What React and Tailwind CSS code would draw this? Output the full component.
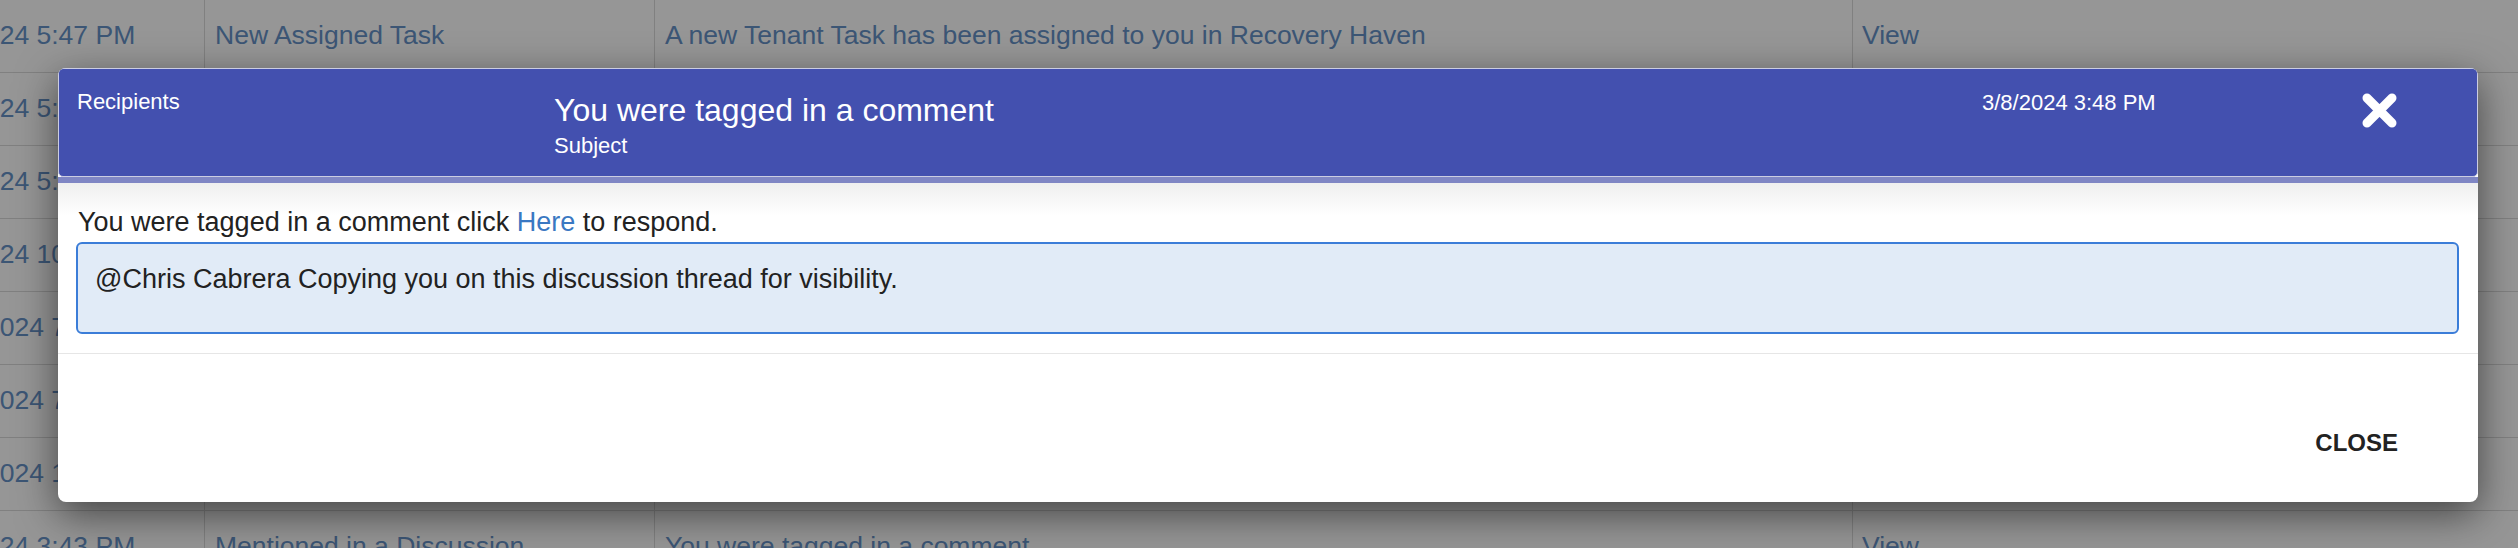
const rows = [
  { date: '3/8/2024 5:47 PM', subject: 'New Assigned Task', message: 'A new Tenant Task has been assigned to you in Recovery Haven' },
  { date: '3/8/2024 5:45 PM', subject: 'New Assigned Task', message: 'A new Tenant Task has been assigned to you in Recovery Haven' },
  { date: '3/8/2024 5:12 PM', subject: 'New Assigned Task', message: 'A new Tenant Task has been assigned to you in Recovery Haven' },
  { date: '3/7/2024 10:52 AM', subject: 'Mentioned in a Discussion', message: 'You were tagged in a comment' },
  { date: '2/29/2024 7:15 PM', subject: 'New Assigned Task', message: 'A new Tenant Task has been assigned to you in Recovery Haven' },
  { date: '2/28/2024 7:02 PM', subject: 'New Assigned Task', message: 'A new Tenant Task has been assigned to you in Recovery Haven' },
  { date: '2/27/2024 11:05 AM', subject: 'Mentioned in a Discussion', message: 'You were tagged in a comment' },
  { date: '3/8/2024 3:43 PM', subject: 'Mentioned in a Discussion', message: 'You were tagged in a comment' },
];

function CloseIcon() {
  return (
    <svg width="35" height="35" viewBox="0 0 35 35" fill="none">
      <path d="M5 5L30 30M30 5L5 30" stroke="white" strokeWidth="9" strokeLinecap="round" />
    </svg>
  );
}

export default function App() {
  return (
    <div className="relative h-[548px] w-full overflow-hidden bg-white font-['Liberation_Sans',Arial,sans-serif]">
      {/* notifications table behind the modal, scrolled a little to the right */}
      <div className="overflow-hidden">
        <div className="ml-[-84px] flex w-[2602px] flex-col text-[26.5px] text-[#6692c8]">
          {rows.map((r, i) => (
            <div key={i} className="flex h-[73px] shrink-0 border-b border-[#dadada]">
              <div className="flex w-[289px] shrink-0 items-center whitespace-nowrap border-r border-[#dadada] pl-[10px]">{r.date}</div>
              <div className="flex w-[450px] shrink-0 items-center whitespace-nowrap border-r border-[#dadada] pl-[10px]">{r.subject}</div>
              <div className="flex w-[1198px] shrink-0 items-center whitespace-nowrap border-r border-[#dadada] pl-[10px]">{r.message}</div>
              <div className="flex flex-1 items-center pl-[9px]">View</div>
            </div>
          ))}
        </div>
      </div>

      {/* backdrop */}
      <div className="absolute inset-0 bg-black/[0.41]" />

      {/* modal */}
      <div className="absolute inset-0 pl-[58px] pt-[68px]">
        <div className="w-[2420px] overflow-hidden rounded-[8px] bg-white shadow-[0_12px_40px_rgba(0,0,0,0.55)]">
          <div className="flex h-[109px] items-start rounded-[5px] border border-[#cbcde2] bg-[#4350af] pl-[18px] pt-[20px] text-white">
            <div className="w-[477px] shrink-0 text-[22px] leading-[26px]">Recipients</div>
            <div className="flex w-[1428px] shrink-0 flex-col pt-[3px]">
              <div className="text-[32px] leading-[37px]">You were tagged in a comment</div>
              <div className="mt-[4px] text-[22px] leading-[26px]">Subject</div>
            </div>
            <div className="w-[380px] shrink-0 pt-[1px] text-[22px] leading-[26px]">3/8/2024 3:48 PM</div>
            <button className="mt-[4px]">
              <CloseIcon />
            </button>
          </div>
          <div className="h-[6px] bg-[#7f86c4]" />
          <div className="border-b border-[#e6e6e6] bg-[linear-gradient(to_bottom,#efefef,#ffffff_32px)] pb-[19px] pl-[18px] pr-[19px] pt-[24px] text-[#222222]">
            <p className="ml-[2px] text-[27px] leading-[31px]">
              You were tagged in a comment click <a className="text-[#3a78c2]">Here</a> to respond.
            </p>
            <div className="mt-[4px] h-[92px] rounded-[6px] border-2 border-[#3b7dd8] bg-[#e1ebf7] pl-[17px] pt-[20px] text-[27px] leading-[31px]">
              @Chris Cabrera Copying you on this discussion thread for visibility.
            </div>
          </div>
          <div className="flex h-[148px] items-start justify-end pr-[80px] pt-[75px]">
            <button className="text-[24px] font-semibold leading-[28px] text-[#222222]">CLOSE</button>
          </div>
        </div>
      </div>
    </div>
  );
}
